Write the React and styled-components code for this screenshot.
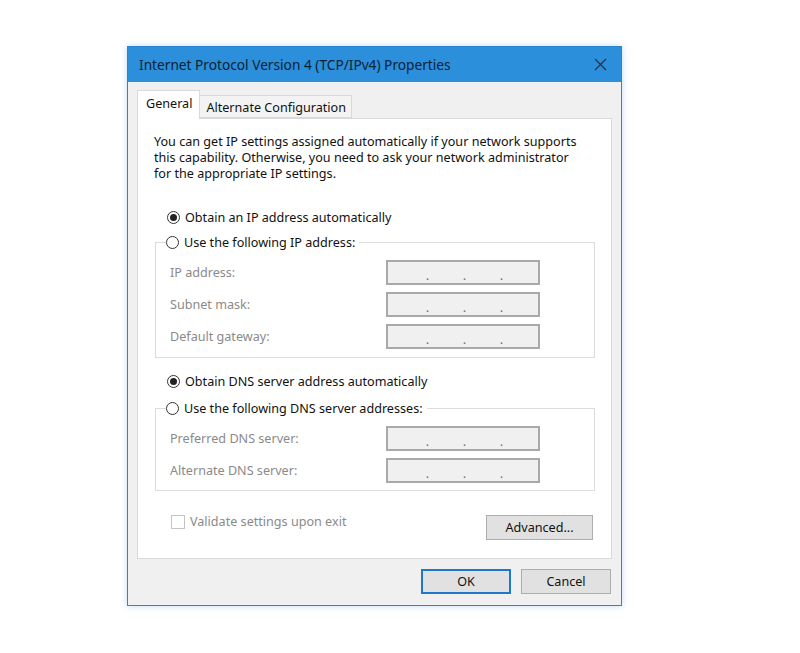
import styled, { createGlobalStyle } from "styled-components";

const GlobalStyle = createGlobalStyle`
  html, body {
    margin: 0;
    padding: 0;
    background: #ffffff;
  }
  body {
    font-family: "Noto Sans", "Open Sans", "Liberation Sans", sans-serif;
  }
`;

const Page = styled.div`
  width: 800px;
  height: 653px;
  padding: 46px 0 0 127px;
  box-sizing: border-box;
  background: #ffffff;
`;

const Window = styled.div`
  width: 495px;
  height: 560px;
  box-sizing: border-box;
  border: 1px solid #2a86cf;
  background: #f0f0f0;
  box-shadow: 0 0 6px rgba(70, 150, 220, 0.35);
  display: flex;
  flex-direction: column;
`;

const TitleBar = styled.div`
  height: 35px;
  background: #2b8fdb;
  display: flex;
  align-items: center;
  justify-content: space-between;
  padding: 0 14px 0 11px;
  color: #0c1f33;
  font-size: 13.7px;
`;

const CloseIcon = () => (
  <svg width="13" height="13" viewBox="0 0 13 13">
    <path d="M1 1 L12 12 M12 1 L1 12" stroke="#1d3550" strokeWidth="1.2" />
  </svg>
);

const Body = styled.div`
  flex: 1;
  padding: 8px 9px 0 9px;
  display: flex;
  flex-direction: column;
`;

const TabStrip = styled.div`
  display: flex;
  align-items: flex-end;
  height: 28px;
`;

const Tab = styled.div`
  position: relative;
  box-sizing: border-box;
  height: ${({ $active }) => ($active ? "29px" : "23px")};
  margin-bottom: ${({ $active }) => ($active ? "-1px" : "0")};
  z-index: ${({ $active }) => ($active ? 1 : 0)};
  padding: ${({ $active }) => ($active ? "4px 7px 0 8px" : "3px 5px 0 6px")};
  background: ${({ $active }) => ($active ? "#ffffff" : "#f3f3f3")};
  border: 1px solid #d9d9d9;
  border-bottom: ${({ $active }) => ($active ? "none" : "1px solid #d9d9d9")};
  border-left: ${({ $active }) => ($active ? "1px solid #d9d9d9" : "none")};
  font-size: 12.6px;
  color: #111;
  white-space: nowrap;
`;

const Panel = styled.div`
  width: 475px;
  height: 441px;
  box-sizing: border-box;
  background: #ffffff;
  border: 1px solid #d9d9d9;
  padding: 15px 16px 0 17px;
  display: flex;
  flex-direction: column;
  font-size: 12.6px;
  color: #111;
`;

const Intro = styled.p`
  margin: 0 0 0 -1px;
  line-height: 16px;
`;

const RadioRow = styled.label`
  display: flex;
  align-items: center;
  height: 20px;
  gap: 5px;
  margin-top: ${({ $mt }) => $mt || 0}px;
  margin-left: 12px;
  white-space: nowrap;
`;

const RadioDot = styled.span`
  width: 13px;
  height: 13px;
  box-sizing: border-box;
  border-radius: 50%;
  border: 1px solid #333;
  background: #fff;
  display: flex;
  align-items: center;
  justify-content: center;
  &::after {
    content: "";
    width: 7px;
    height: 7px;
    border-radius: 50%;
    background: ${({ $checked }) => ($checked ? "#222" : "transparent")};
  }
`;

const Group = styled.fieldset`
  margin: ${({ $mt }) => $mt || 0}px 0 0 0;
  padding: 0 0 ${({ $pb }) => $pb || 8}px 0;
  width: 440px;
  box-sizing: border-box;
  border: 1px solid #dcdcdc;
  display: flex;
  flex-direction: column;
  gap: 7px;
`;

const Legend = styled.legend`
  padding: 0 4px 0 0;
  margin-left: 10px;
`;

const LegendRadio = styled(RadioRow)`
  margin-left: 0;
`;

const FieldRow = styled.div`
  display: flex;
  align-items: center;
  height: 25px;
  padding-left: 14px;
  &:first-of-type {
    margin-top: 8px;
  }
`;

const FieldLabel = styled.span`
  width: 216px;
  color: #8a8a8a;
`;

const IpBox = styled.div`
  width: 154px;
  height: 25px;
  box-sizing: border-box;
  background: #f0f0f0;
  border: 2px solid #a9a9a9;
  display: flex;
  align-items: center;
  gap: 30px;
  padding: 4px 0 0 36px;
  color: #707070;
  font-size: 13px;
  span {
    width: 7px;
    text-align: center;
  }
`;

const BottomRow = styled.div`
  display: flex;
  align-items: center;
  justify-content: space-between;
  margin-top: 24px;
  width: 438px;
`;

const CheckLabel = styled.label`
  display: flex;
  align-items: center;
  gap: 5px;
  margin-left: 16px;
  margin-top: -12px;
  color: #8a8a8a;
`;

const CheckBox = styled.span`
  width: 14px;
  height: 14px;
  box-sizing: border-box;
  border: 1px solid #c4c4c4;
  background: #fff;
`;

const Button = styled.button`
  width: ${({ $w }) => $w || 90}px;
  height: 25px;
  box-sizing: border-box;
  background: #e1e1e1;
  border: ${({ $primary }) => ($primary ? "2px solid #1f78c8" : "1px solid #adadad")};
  font-family: inherit;
  font-size: 12.6px;
  color: #111;
  padding: 0;
`;

const Footer = styled.div`
  display: flex;
  justify-content: flex-end;
  gap: 10px;
  margin-top: 10px;
  padding-right: 1px;
`;

const IpField = () => (
  <IpBox>
    <span>.</span>
    <span>.</span>
    <span>.</span>
  </IpBox>
);

const ipRows = ["IP address:", "Subnet mask:", "Default gateway:"];
const dnsRows = ["Preferred DNS server:", "Alternate DNS server:"];

export default function App() {
  return (
    <>
      <GlobalStyle />
      <Page>
        <Window>
          <TitleBar>
            <span>Internet Protocol Version 4 (TCP/IPv4) Properties</span>
            <CloseIcon />
          </TitleBar>
          <Body>
            <TabStrip>
              <Tab $active>General</Tab>
              <Tab>Alternate Configuration</Tab>
            </TabStrip>
            <Panel>
              <Intro>
                You can get IP settings assigned automatically if your network supports
                <br />
                this capability. Otherwise, you need to ask your network administrator
                <br />
                for the appropriate IP settings.
              </Intro>
              <RadioRow $mt={25}>
                <RadioDot $checked />
                Obtain an IP address automatically
              </RadioRow>
              <Group $mt={5} $pb={8}>
                <Legend>
                  <LegendRadio>
                    <RadioDot />
                    Use the following IP address:
                  </LegendRadio>
                </Legend>
                {ipRows.map((label) => (
                  <FieldRow key={label}>
                    <FieldLabel>{label}</FieldLabel>
                    <IpField />
                  </FieldRow>
                ))}
              </Group>
              <RadioRow $mt={13}>
                <RadioDot $checked />
                Obtain DNS server address automatically
              </RadioRow>
              <Group $mt={7} $pb={7}>
                <Legend>
                  <LegendRadio>
                    <RadioDot />
                    Use the following DNS server addresses:
                  </LegendRadio>
                </Legend>
                {dnsRows.map((label) => (
                  <FieldRow key={label}>
                    <FieldLabel>{label}</FieldLabel>
                    <IpField />
                  </FieldRow>
                ))}
              </Group>
              <BottomRow>
                <CheckLabel>
                  <CheckBox />
                  Validate settings upon exit
                </CheckLabel>
                <Button $w={107}>Advanced...</Button>
              </BottomRow>
            </Panel>
            <Footer>
              <Button $primary>OK</Button>
              <Button>Cancel</Button>
            </Footer>
          </Body>
        </Window>
      </Page>
    </>
  );
}
